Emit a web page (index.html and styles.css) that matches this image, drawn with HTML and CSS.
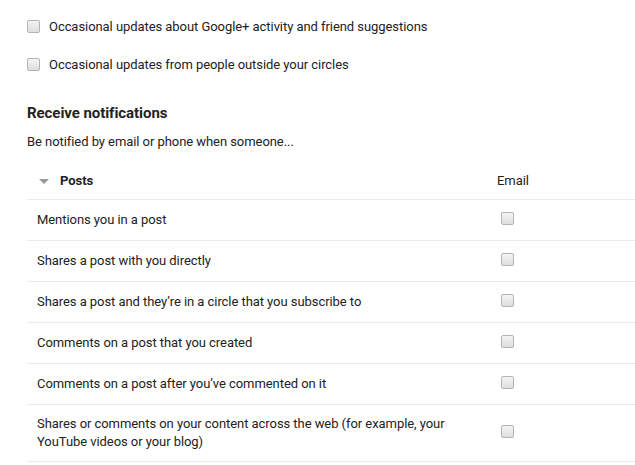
FILE: index.html
```html
<!DOCTYPE html>
<html lang="en">
<head>
<meta charset="UTF-8">
<meta name="viewport" content="width=device-width, initial-scale=1.0">
<title>Notification settings</title>
<link rel="stylesheet" href="styles.css">
</head>
<body>
<div class="page">
    <div class="options">
        <label class="option"><input type="checkbox" class="box"> Occasional updates about Google+ activity and friend suggestions</label>
        <label class="option"><input type="checkbox" class="box"> Occasional updates from people outside your circles</label>
    </div>

    <h2>Receive notifications</h2>
    <p class="desc">Be notified by email or phone when someone...</p>

    <div class="table">
        <div class="row head">
            <div class="cell-text"><span class="arrow"></span>Posts</div>
            <div class="cell-check">Email</div>
        </div>
        <div class="row">
            <div class="cell-text">Mentions you in a post</div>
            <div class="cell-check"><input type="checkbox" class="box"></div>
        </div>
        <div class="row">
            <div class="cell-text">Shares a post with you directly</div>
            <div class="cell-check"><input type="checkbox" class="box"></div>
        </div>
        <div class="row">
            <div class="cell-text">Shares a post and they’re in a circle that you subscribe to</div>
            <div class="cell-check"><input type="checkbox" class="box"></div>
        </div>
        <div class="row">
            <div class="cell-text">Comments on a post that you created</div>
            <div class="cell-check"><input type="checkbox" class="box"></div>
        </div>
        <div class="row">
            <div class="cell-text">Comments on a post after you’ve commented on it</div>
            <div class="cell-check"><input type="checkbox" class="box"></div>
        </div>
        <div class="row tall">
            <div class="cell-text">Shares or comments on your content across the web (for example, your YouTube videos or your blog)</div>
            <div class="cell-check"><input type="checkbox" class="box"></div>
        </div>
    </div>
</div>
</body>
</html>
```

FILE: styles.css
```css
body {
    font-family: Roboto, 'Liberation Sans', Arial, sans-serif;
    font-size: 13px;
    letter-spacing: -0.06px;
    color: #222;
    margin: 0;
    padding: 0;
    background-color: #fff;
}
.page {
    padding: 7px 0 0 27px;
}
.options {
    display: flex;
    flex-direction: column;
}
.option {
    display: flex;
    align-items: center;
    gap: 9px;
    height: 38px;
}
.box {
    appearance: none;
    -webkit-appearance: none;
    width: 13px;
    height: 13px;
    margin: 0;
    border: 1px solid #b4b4b4;
    border-radius: 2px;
    background: linear-gradient(#f4f4f4, #dedede);
    flex-shrink: 0;
}
h2 {
    font-size: 15px;
    font-weight: bold;
    line-height: 20px;
    margin: 20px 0 0;
}
.desc {
    line-height: 18px;
    margin: 10px 0 0;
}
.table {
    margin-top: 12px;
}
.row {
    display: grid;
    grid-template-columns: 463px 1fr;
    align-items: center;
    min-height: 40px;
    border-bottom: 1px solid #ebebeb;
    line-height: 18px;
}
.row.head {
    min-height: 36px;
}
.row.tall {
    min-height: 56px;
}
.cell-text {
    padding-left: 10px;
    padding-right: 20px;
}
.head .cell-text {
    font-weight: bold;
    padding-left: 12px;
    display: flex;
    align-items: center;
}
.arrow {
    width: 0;
    height: 0;
    border-left: 5px solid transparent;
    border-right: 5px solid transparent;
    border-top: 5px solid #999;
    margin-right: 11px;
}
.cell-check {
    display: flex;
    align-items: center;
    padding-left: 11px;
}
.cell-check .box {
    margin-bottom: 3px;
}
.head .cell-check {
    padding-left: 7px;
}
```
